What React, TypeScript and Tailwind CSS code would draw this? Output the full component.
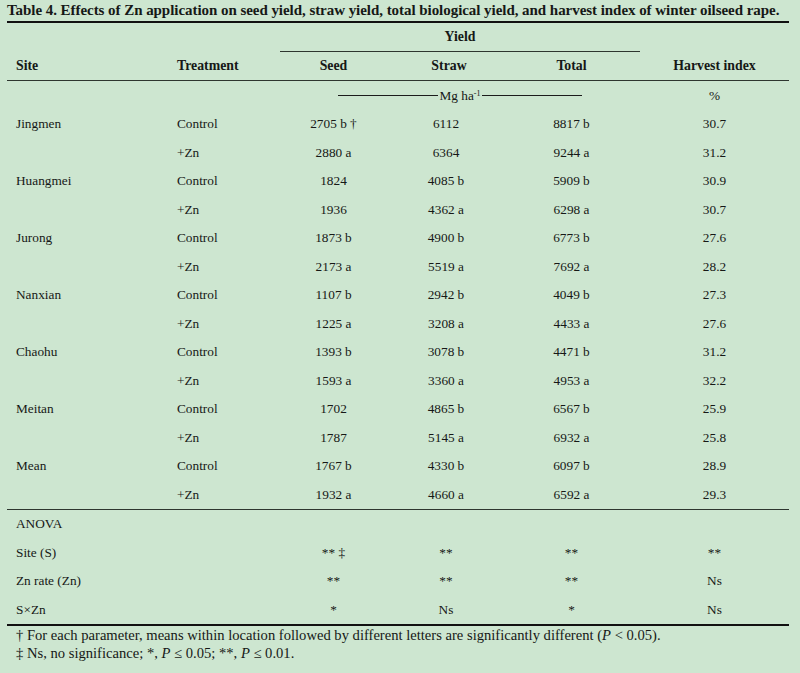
import React from "react";

const rows: [string, string, string, string, string, string][] = [
  ["Jingmen", "Control", "2705 b †", "6112", "8817 b", "30.7"],
  ["", "+Zn", "2880 a", "6364", "9244 a", "31.2"],
  ["Huangmei", "Control", "1824", "4085 b", "5909 b", "30.9"],
  ["", "+Zn", "1936", "4362 a", "6298 a", "30.7"],
  ["Jurong", "Control", "1873 b", "4900 b", "6773 b", "27.6"],
  ["", "+Zn", "2173 a", "5519 a", "7692 a", "28.2"],
  ["Nanxian", "Control", "1107 b", "2942 b", "4049 b", "27.3"],
  ["", "+Zn", "1225 a", "3208 a", "4433 a", "27.6"],
  ["Chaohu", "Control", "1393 b", "3078 b", "4471 b", "31.2"],
  ["", "+Zn", "1593 a", "3360 a", "4953 a", "32.2"],
  ["Meitan", "Control", "1702", "4865 b", "6567 b", "25.9"],
  ["", "+Zn", "1787", "5145 a", "6932 a", "25.8"],
  ["Mean", "Control", "1767 b", "4330 b", "6097 b", "28.9"],
  ["", "+Zn", "1932 a", "4660 a", "6592 a", "29.3"],
];

const anova: [string, string, string, string, string][] = [
  ["Site (S)", "** ‡", "**", "**", "**"],
  ["Zn rate (Zn)", "**", "**", "**", "Ns"],
  ["S×Zn", "*", "Ns", "*", "Ns"],
];

// site | treatment | seed | straw | total | harvest index
const cols = "grid grid-cols-[170px_103px_115px_108px_137px_149px]";

export default function App() {
  return (
    <div className="w-[800px] h-[673px] bg-[#cde6d0] text-[#161816] font-['Liberation_Serif',serif] pl-[7px] pr-[11px] overflow-hidden">
      {/* Title */}
      <div className="h-[23px] border-b-2 border-[#111] text-[15px] font-bold leading-[20px] whitespace-nowrap tracking-[-0.05px]">
        Table 4. Effects of Zn application on seed yield, straw yield, total biological yield, and harvest index of winter oilseed rape.
      </div>

      {/* Yield group header */}
      <div className={`${cols} h-[29px] text-[13.8px] font-bold`}>
        <div className="col-start-3 col-span-3 border-b border-[#2e362f] flex items-center justify-center">Yield</div>
      </div>

      {/* Column headers */}
      <div className={`${cols} h-[29px] items-center text-[13.8px] font-bold border-b border-[#2e362f]`}>
        <div className="pl-[9px]">Site</div>
        <div>Treatment</div>
        <div className="text-center pr-[8px]">Seed</div>
        <div className="text-center">Straw</div>
        <div className="text-center">Total</div>
        <div className="text-center">Harvest index</div>
      </div>

      {/* Units */}
      <div className={`${cols} h-[29px] items-center text-[13.3px]`}>
        <div className="col-start-3 col-span-3 flex items-center">
          <div className="ml-[58px] w-[244px] flex items-center gap-[1px]">
            <div className="flex-1 h-px bg-[#1c1c1c]" />
            <span className="leading-none">
              Mg ha<sup className="text-[8px]">-1</sup>
            </span>
            <div className="flex-1 h-px bg-[#1c1c1c]" />
          </div>
        </div>
        <div className="text-center">%</div>
      </div>

      {/* Data rows */}
      <div className="border-b border-[#2e362f]">
        {rows.map((r, i) => (
          <div key={i} className={`${cols} h-[28.5px] items-center text-[13.3px]`}>
            <div className="pl-[9px]">{r[0]}</div>
            <div>{r[1]}</div>
            <div className="text-center pr-[8px]">{r[2]}</div>
            <div className="text-center pr-[6px]">{r[3]}</div>
            <div className="text-center">{r[4]}</div>
            <div className="text-center">{r[5]}</div>
          </div>
        ))}
      </div>

      {/* ANOVA */}
      <div className="border-b-2 border-[#111]">
        <div className="h-[28.5px] flex items-center pl-[9px] text-[13.3px]">ANOVA</div>
        {anova.map((r, i) => (
          <div key={i} className={`${cols} h-[28.5px] items-center text-[13.3px]`}>
            <div className="pl-[9px]">{r[0]}</div>
            <div />
            <div className="text-center pr-[8px]">{r[1]}</div>
            <div className="text-center pr-[6px]">{r[2]}</div>
            <div className="text-center">{r[3]}</div>
            <div className="text-center">{r[4]}</div>
          </div>
        ))}
      </div>

      {/* Footnotes */}
      <div className="pl-[9px] text-[14.6px] leading-[18px]">
        <p>
          † For each parameter, means within location followed by different letters are significantly different (<i>P</i> &lt; 0.05).
        </p>
        <p>
          ‡ Ns, no significance; *, <i>P</i> ≤ 0.05; **, <i>P</i> ≤ 0.01.
        </p>
      </div>
    </div>
  );
}
